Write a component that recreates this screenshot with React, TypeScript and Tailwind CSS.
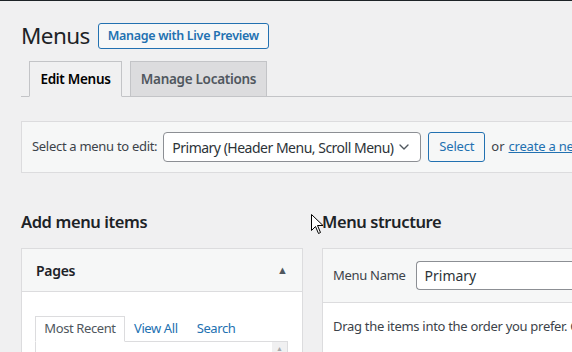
import { ChevronDown } from 'lucide-react';

const font = { fontFamily: '"Noto Sans", "Open Sans", sans-serif' };

function Cursor() {
  return (
    <svg className="absolute left-[311px] top-[213px]" width="13" height="21" viewBox="0 0 13 21">
      <path d="M0.5 0.5 L0.5 16.5 L4.5 12.5 L7.5 19.5 L9.5 18.5 L6.5 11.5 L12 11.5 Z" fill="#fff" stroke="#000" strokeWidth="1" />
    </svg>
  );
}

export default function App() {
  return (
    <div
      className="relative w-[572px] h-[352px] overflow-hidden bg-[#f0f0f1] border-t border-[#1d2327] text-[#3c434a]"
      style={font}
    >
      {/* Title */}
      <div className="flex items-center pl-[21px] pt-[22px] gap-[8px]">
        <h1 className="text-[22.5px] leading-[26px] text-[#1d2327] font-normal tracking-[-0.6px]">Menus</h1>
        <button className="h-[26px] w-[171px] border border-[#2271b1] rounded-[3px] bg-[#f6f7f7] text-[#2271b1] text-[12.5px] font-semibold tracking-[-0.3px]">
          Manage with Live Preview
        </button>
      </div>

      {/* Tabs */}
      <div className="ml-[21px] mt-[13px] flex items-end gap-[8px] pl-[8px] border-b border-[#c3c4c7] h-[35px]">
        <div className="w-[93px] h-[36px] -mb-px flex items-center justify-center border border-[#c3c4c7] border-b-[#f0f0f1] bg-[#f0f0f1] text-[13.5px] font-semibold text-black tracking-[-0.3px]">
          Edit Menus
        </div>
        <div className="w-[137px] h-[35px] flex items-center justify-center border border-[#c3c4c7] border-b-0 bg-[#dcdcde] text-[13.5px] font-semibold text-[#50575e] tracking-[-0.3px]">
          Manage Locations
        </div>
      </div>

      {/* Select menu bar */}
      <div className="ml-[21px] mt-[24px] w-[600px] h-[52px] border border-[#dcdcde] bg-[#f6f7f7] flex items-center pl-[10px] text-[13px] whitespace-nowrap">
        <span className="tracking-[-0.3px]">Select a menu to edit:</span>
        <div className="ml-[6px] shrink-0 w-[258px] h-[30px] border border-[#8c8f94] rounded-[4px] bg-white flex items-center justify-between pl-[8px] pr-[8px] text-[14px] text-[#2c3338] tracking-[-0.5px]">
          <span>Primary (Header Menu, Scroll Menu)</span>
          <ChevronDown size={16} strokeWidth={2} color="#50575e" className="shrink-0" />
        </div>
        <button className="ml-[7px] shrink-0 w-[57px] h-[30px] border border-[#2271b1] rounded-[3px] bg-[#f6f7f7] text-[#2271b1] text-[13px] tracking-[-0.2px]">
          Select
        </button>
        <span className="ml-[6px]">or</span>
        <span className="ml-[4px] text-[#2271b1] underline tracking-[-0.2px]">create a new menu</span>
      </div>

      {/* Columns */}
      <div className="flex pl-[21px] mt-[37px] gap-[19px] items-start">
        <div className="w-[282px] shrink-0">
          <h2 className="text-[16.5px] leading-[24px] font-semibold text-[#1d2327] tracking-[-0.4px]">Add menu items</h2>
          <div className="mt-[14px] border border-[#dcdcde] bg-white">
            <div className="h-[43px] bg-[#f6f7f7] border-b border-[#dcdcde] flex items-center justify-between pl-[14px] pr-[14px]">
              <span className="text-[14px] font-semibold text-[#1d2327] tracking-[-0.3px]">Pages</span>
              <span className="text-[11px] text-[#50575e]">▲</span>
            </div>
            <div className="pt-[24px] pl-[13px] pr-[14px]">
              <div className="flex items-end text-[13px] tracking-[-0.4px]">
                <div className="w-[90px] h-[26px] flex items-center justify-center border border-[#dcdcde] border-b-white bg-white text-[#50575e]">
                  Most Recent
                </div>
                <span className="ml-[9px] h-[26px] flex items-center text-[#2271b1]">View All</span>
                <span className="ml-[19px] h-[26px] flex items-center text-[#2271b1]">Search</span>
              </div>
              <div className="-mt-px h-[40px] border border-[#dcdcde] flex justify-end">
                <div className="w-[15px] bg-[#f0f0f1] flex justify-center pt-[2px] text-[7px] text-[#a7aaad]">▲</div>
              </div>
            </div>
          </div>
        </div>

        <div className="w-[300px] shrink-0">
          <h2 className="text-[16.5px] leading-[24px] font-semibold text-[#1d2327] tracking-[-0.4px]">Menu structure</h2>
          <div className="mt-[14px] border border-[#dcdcde] bg-white">
            <div className="h-[54px] bg-[#f6f7f7] border-b border-[#dcdcde] flex items-center pl-[10px]">
              <span className="text-[13px] tracking-[-0.3px]">Menu Name</span>
              <div className="ml-[10px] flex-1 h-[29px] border border-[#8c8f94] rounded-l-[4px] border-r-0 bg-white flex items-center pl-[8px] text-[14px] text-[#2c3338]">
                Primary
              </div>
            </div>
            <div className="pt-[14px] pl-[10px] h-[60px] text-[13px] whitespace-nowrap tracking-[-0.3px]">
              Drag the items into the order you prefer. Click the arrow on the right of the item to reveal additional configuration options.
            </div>
          </div>
        </div>
      </div>

      <Cursor />
    </div>
  );
}
